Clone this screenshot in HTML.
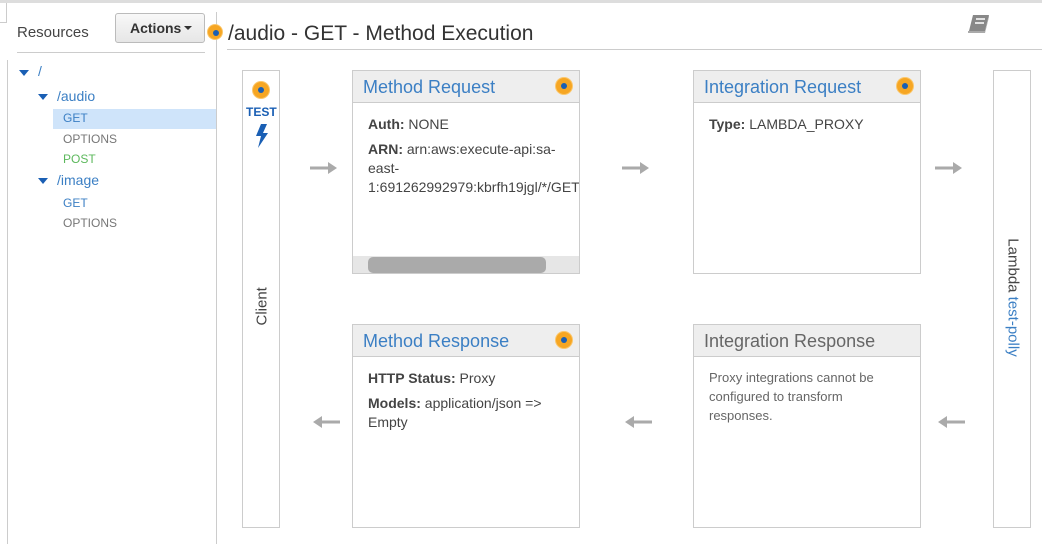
<!DOCTYPE html>
<html><head><style>
*{margin:0;padding:0;box-sizing:border-box}
body{width:1042px;height:544px;background:#fff;font-family:"Liberation Sans",Arial,sans-serif;position:relative;overflow:hidden;color:#444}
.a{position:absolute}
.box{position:absolute;border:1px solid #ccc;background:#fff}
.hd{height:32px;background:#eee;border-bottom:1px solid #ccc;padding:6px 10px;font-size:18px;color:#3b7fc4}
.dot{position:absolute;width:16px;height:16px;border-radius:50%;background:#f6a623;box-shadow:0 0 0 1px #fbc66a}
.dot::after{content:"";position:absolute;left:5px;top:5px;width:6px;height:6px;border-radius:50%;background:#1a5fb4}
.bd{padding:12px 15px;font-size:14px;line-height:19px;color:#444}
.bd p{margin-bottom:6px}
.arr{position:absolute;width:28px;height:12px}
.t{position:absolute;font-size:12px}
.tri{position:absolute;width:0;height:0;border-left:5px solid transparent;border-right:5px solid transparent;border-top:6px solid #1a5fb4}
</style></head><body>
<div class="a" style="left:0;top:0;width:1042px;height:3px;background:#ddd"></div>
<div class="a" style="left:0;top:3px;width:7px;height:20px;border-right:1px solid #ccc;border-bottom:1px solid #ccc"></div>
<div class="a" style="left:7px;top:60px;width:1px;height:484px;background:#ccc"></div>
<div class="a" style="left:216px;top:12px;width:1px;height:532px;background:#ccc"></div>
<div class="a" style="left:17px;top:24px;font-size:15px;color:#444">Resources</div>
<div class="a" style="left:115px;top:13px;width:90px;height:30px;border:1px solid #bbb;border-radius:3px;background:linear-gradient(#f8f8f8,#e6e6e6);font-size:14px;font-weight:bold;color:#333;padding:6px 0 0 14px">Actions<span style="display:inline-block;margin-left:3px;width:0;height:0;border-left:4px solid transparent;border-right:4px solid transparent;border-top:4px solid #333;vertical-align:3px"></span></div>
<div class="a" style="left:17px;top:52px;width:188px;height:1px;background:#ccc"></div>
<div class="tri" style="left:19px;top:70px"></div><div class="a" style="left:38px;top:63px;font-size:14px;color:#3b7fc4">/</div>
<div class="tri" style="left:38px;top:94px"></div><div class="a" style="left:57px;top:88px;font-size:14px;color:#3b7fc4">/audio</div>
<div class="a" style="left:53px;top:109px;width:163px;height:20px;background:#cfe4fa"></div>
<div class="t" style="left:63px;top:111px;color:#3b7fc4">GET</div>
<div class="t" style="left:63px;top:132px;color:#777">OPTIONS</div>
<div class="t" style="left:63px;top:152px;color:#5cb85c">POST</div>
<div class="tri" style="left:38px;top:178px"></div><div class="a" style="left:57px;top:172px;font-size:14px;color:#3b7fc4">/image</div>
<div class="t" style="left:63px;top:196px;color:#3b7fc4">GET</div>
<div class="t" style="left:63px;top:216px;color:#777">OPTIONS</div>
<div class="dot" style="left:208px;top:25px;width:14px;height:14px"></div>
<div class="a" style="left:228px;top:22px;font-size:21px;color:#333">/audio - GET - Method Execution</div>
<div class="a" style="left:227px;top:49px;width:815px;height:1px;background:#ccc"></div>
<svg class="a" style="left:967px;top:14px" width="24" height="22" viewBox="0 0 24 22"><path d="M6 1h16l-4 16H2z" fill="#888"/><path d="M2 17h16l4-16v2l-4 16H2z" fill="#aaa"/><path d="M2 17v2" stroke="#aaa" stroke-width="2"/><path d="M9 5h9M8 9h9" stroke="#fff" stroke-width="1.6"/></svg>

<div class="box" style="left:242px;top:70px;width:38px;height:458px">
 <div class="dot" style="left:10px;top:11px"></div>
 <div class="a" style="left:3px;top:34px;font-size:12px;font-weight:bold;color:#1a5fb4">TEST</div>
 <svg class="a" style="left:12px;top:53px" width="14" height="24" viewBox="0 0 14 24"><path d="M6 0L1 12h5l-3 12 10-15H8l4-9z" fill="#1a5fb4"/></svg>
 <div class="a" style="left:3px;top:230px;transform:rotate(-90deg);transform-origin:center;font-size:15px;color:#444;width:32px;text-align:center">Client</div>
</div>

<div class="box" style="left:352px;top:70px;width:228px;height:204px;overflow:hidden">
 <div class="hd">Method Request</div><div class="dot" style="left:203px;top:7px"></div>
 <div class="bd"><p><b>Auth:</b> NONE</p><p style="white-space:nowrap"><b>ARN:</b> arn:aws:execute-api:sa-<br>east-<br>1:691262992979:kbrfh19jgl/*/GET</p></div>
 <div class="a" style="left:0;top:185px;width:228px;height:18px;background:#e6e6e6"></div>
 <div class="a" style="left:15px;top:186px;width:178px;height:16px;background:#aaa;border-radius:5px"></div>
</div>
<div class="box" style="left:693px;top:70px;width:228px;height:204px">
 <div class="hd">Integration Request</div><div class="dot" style="left:203px;top:7px"></div>
 <div class="bd"><p><b>Type:</b> LAMBDA_PROXY</p></div>
</div>
<div class="box" style="left:993px;top:70px;width:38px;height:458px">
 <div class="a" style="left:-64px;top:218px;width:166px;transform:rotate(90deg);font-size:15px;color:#444;text-align:center;white-space:nowrap">Lambda <span style="color:#3b7fc4">test-polly</span></div>
</div>
<div class="box" style="left:352px;top:324px;width:228px;height:204px">
 <div class="hd">Method Response</div><div class="dot" style="left:203px;top:7px"></div>
 <div class="bd"><p><b>HTTP Status:</b> Proxy</p><p><b>Models:</b> application/json =&gt;<br>Empty</p></div>
</div>
<div class="box" style="left:693px;top:324px;width:228px;height:204px">
 <div class="hd" style="color:#666">Integration Response</div>
 <div class="bd" style="font-size:13px;color:#666;padding-top:11px">Proxy integrations cannot be configured to transform responses.</div>
</div>

<svg class="arr" style="left:310px;top:162px" viewBox="0 0 28 12"><path d="M0 6h20" stroke="#aaa" stroke-width="3"/><path d="M18 0l9 6-9 6z" fill="#aaa"/></svg>
<svg class="arr" style="left:622px;top:162px" viewBox="0 0 28 12"><path d="M0 6h20" stroke="#aaa" stroke-width="3"/><path d="M18 0l9 6-9 6z" fill="#aaa"/></svg>
<svg class="arr" style="left:935px;top:162px" viewBox="0 0 28 12"><path d="M0 6h20" stroke="#aaa" stroke-width="3"/><path d="M18 0l9 6-9 6z" fill="#aaa"/></svg>
<svg class="arr" style="left:312px;top:416px" viewBox="0 0 28 12"><path d="M8 6h20" stroke="#aaa" stroke-width="3"/><path d="M10 0L1 6l9 6z" fill="#aaa"/></svg>
<svg class="arr" style="left:624px;top:416px" viewBox="0 0 28 12"><path d="M8 6h20" stroke="#aaa" stroke-width="3"/><path d="M10 0L1 6l9 6z" fill="#aaa"/></svg>
<svg class="arr" style="left:937px;top:416px" viewBox="0 0 28 12"><path d="M8 6h20" stroke="#aaa" stroke-width="3"/><path d="M10 0L1 6l9 6z" fill="#aaa"/></svg>
</body></html>
